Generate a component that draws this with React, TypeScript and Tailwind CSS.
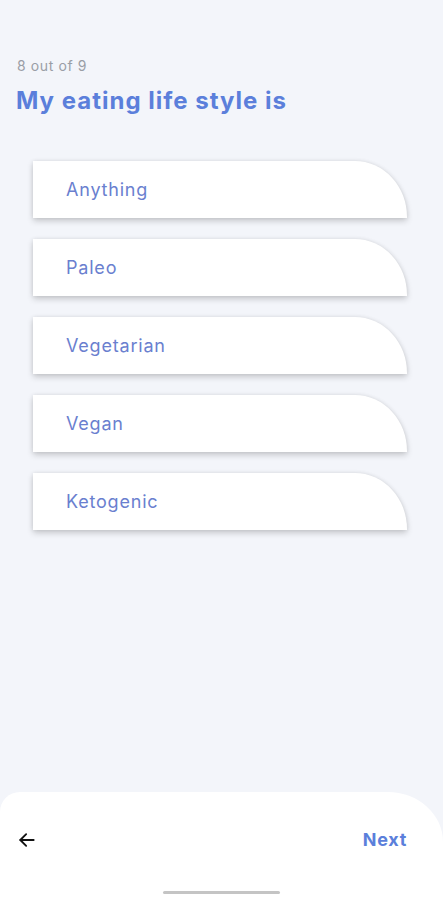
import React from "react";

const options = ["Anything", "Paleo", "Vegetarian", "Vegan", "Ketogenic"];

export default function App() {
  return (
    <div
      className="w-[443px] h-[900px] bg-[#f3f5fa] flex flex-col overflow-hidden"
      style={{ fontFamily: "Inter, 'Noto Sans', sans-serif" }}
    >
      <div className="flex-1 flex flex-col">
        <div className="pt-[57px] pl-[17px] text-[14px] leading-[18px] text-[#9a9ea6] tracking-[0.6px]">8 out of 9</div>
        <div className="pl-[16px] pt-[9px] text-[24px] leading-[34px] font-bold text-[#5b7fdb] tracking-[1px]">
          My eating life style is
        </div>
        <div className="flex flex-col gap-[21px] pl-[33px] pt-[43px]">
          {options.map((o) => (
            <div
              key={o}
              className="w-[374px] h-[57px] bg-white rounded-tr-[52px_56px] shadow-[0_3px_6px_rgba(0,0,0,0.18),0_0_4px_rgba(0,0,0,0.08)] flex items-center pl-[33px] text-[18px] text-[#6a7fcf] tracking-[0.8px]"
            >
              {o}
            </div>
          ))}
        </div>
      </div>
      <div className="h-[108px] bg-white rounded-tl-[20px] rounded-tr-[55px_50px] flex flex-col">
        <div className="flex items-center justify-between pl-[17px] pr-[36px] pt-[34px]">
          <svg width="20" height="20" viewBox="0 0 24 24" fill="none" stroke="#111" strokeWidth="2.2" strokeLinecap="round" strokeLinejoin="round">
            <path d="M20 12H4" />
            <path d="M11 5l-7 7 7 7" />
          </svg>
          <span className="text-[18px] font-bold text-[#5b7fdb] tracking-[0.7px]">Next</span>
        </div>
        <div className="mt-auto mb-[6px] mx-auto w-[117px] h-[3px] rounded-full bg-[#c4c4c4]" />
      </div>
    </div>
  );
}
